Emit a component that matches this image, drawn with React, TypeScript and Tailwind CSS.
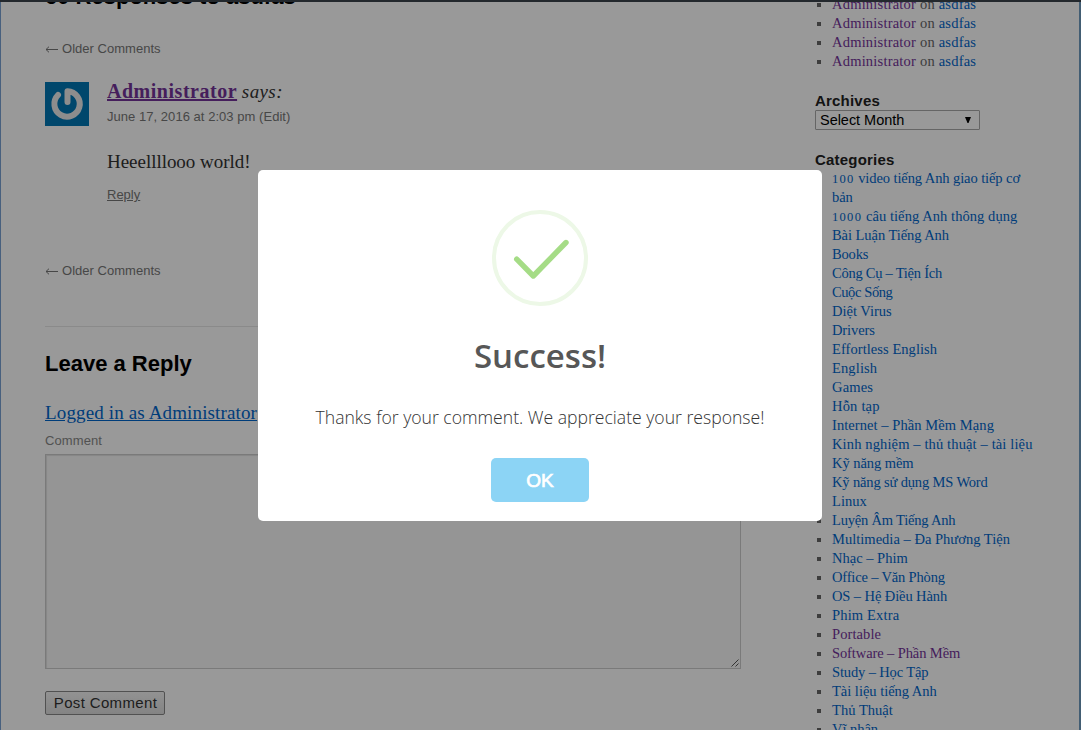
import React from "react";

type Category = { name: React.ReactNode; tone?: string; track: string };

const blue = "text-[#0066cc]";
const purple = "text-[#743399]";

const categories: Category[] = [
  {
    name: (
      <>
        <span className="text-[12.5px] leading-none tracking-[1.3px]">100</span> video tiếng Anh giao tiếp cơ<br />bản
      </>
    ),
    track: "tracking-[-0.09px]",
  },
  {
    name: (
      <>
        <span className="text-[12.5px] leading-none tracking-[1.3px]">1000</span> câu tiếng Anh thông dụng
      </>
    ),
    track: "tracking-[0.07px]",
  },
  { name: "Bài Luận Tiếng Anh", track: "tracking-[-0.06px]" },
  { name: "Books", track: "tracking-[-0.15px]" },
  { name: "Công Cụ – Tiện Ích", track: "tracking-[-0.25px]" },
  { name: "Cuộc Sống", track: "tracking-[-0.4px]" },
  { name: "Diệt Virus", track: "tracking-normal" },
  { name: "Drivers", track: "tracking-[-0.1px]" },
  { name: "Effortless English", track: "tracking-[0.06px]" },
  { name: "English", track: "tracking-[0.13px]" },
  { name: "Games", track: "tracking-[0.18px]" },
  { name: "Hỗn tạp", track: "tracking-[0.2px]" },
  { name: "Internet – Phần Mềm Mạng", track: "tracking-[0.07px]" },
  { name: "Kinh nghiệm – thủ thuật – tài liệu", track: "tracking-[0.13px]" },
  { name: "Kỹ năng mềm", track: "tracking-[-0.05px]" },
  { name: "Kỹ năng sử dụng MS Word", track: "tracking-[-0.15px]" },
  { name: "Linux", track: "tracking-[0.04px]" },
  { name: "Luyện Âm Tiếng Anh", track: "tracking-[-0.2px]" },
  { name: "Multimedia – Đa Phương Tiện", track: "tracking-[0.02px]" },
  { name: "Nhạc – Phim", track: "tracking-normal" },
  { name: "Office – Văn Phòng", track: "tracking-[-0.17px]" },
  { name: "OS – Hệ Điều Hành", track: "tracking-[-0.1px]" },
  { name: "Phim Extra", track: "tracking-[0.17px]" },
  { name: "Portable", tone: purple, track: "tracking-[0.1px]" },
  { name: "Software – Phần Mềm", tone: purple, track: "tracking-[-0.1px]" },
  { name: "Study – Học Tập", track: "tracking-[-0.14px]" },
  { name: "Tài liệu tiếng Anh", track: "tracking-[-0.02px]" },
  { name: "Thủ Thuật", track: "tracking-[0.04px]" },
  { name: "Vĩ nhân", track: "tracking-[-0.05px]" },
];

function Item({ children }: { children: React.ReactNode }) {
  return (
    <li className="flex leading-[19px]">
      <span className="mt-[8px] mr-[11px] ml-[2px] size-1 shrink-0 bg-[#666]" />
      <span className="whitespace-nowrap">{children}</span>
    </li>
  );
}

function Avatar() {
  return (
    <svg viewBox="0 0 44 44" className="size-11 shrink-0">
      <rect width="44" height="44" fill="#0077b5" />
      <path d="M13 13A12.700 12.700 0 1 0 22.500 9.200V20" fill="none" stroke="#ececec" strokeWidth="6" strokeLinecap="round" strokeLinejoin="round" />
    </svg>
  );
}

function OlderComments() {
  return (
    <a className="flex h-[20px] text-[13px] leading-[20px] text-[#777]">
      <svg viewBox="0 0 13 7" className="mt-[7px] mr-[4px] h-[7px] w-[13px]" fill="none" stroke="currentColor">
        <path d="M13 3.5H1M4 .7 1 3.5l3 2.8" />
      </svg>
      <span className="tracking-[0.02px]">Older Comments</span>
    </a>
  );
}

function Main() {
  return (
    <main className="w-[696px] shrink-0 font-['Liberation_Sans',sans-serif]">
      <h3 className="-mt-[17px] h-[56px] text-[22px] leading-[28px] font-bold text-black">60 Responses to asdfas</h3>
      <OlderComments />
      <article className="mt-[23px] flex h-[179px]">
        <Avatar />
        <div className="ml-[18px]">
          <div className="-mt-[2px] h-[24px] font-['Liberation_Serif',serif] text-[19px] leading-[24px] text-[#333]">
            <a className="text-[20px] leading-none font-bold tracking-[0.52px] text-[#743399] underline">Administrator</a>{" "}
            <span className="tracking-[0.4px] italic">says:</span>
          </div>
          <div className="mt-[3px] h-[20px] text-[13px] leading-[20px] tracking-[0.04px] text-[#777]">June 17, 2016 at 2:03 pm (Edit)</div>
          <p className="mt-[23px] h-[24px] font-['Liberation_Serif',serif] text-[19px] leading-[24px] tracking-[-0.03px] text-[#333]">
            Heeellllooo world!
          </p>
          <a className="mt-[11px] block text-[13px] leading-[20px] text-[#777] underline">Reply</a>
        </div>
      </article>
      <OlderComments />
      <section className="mt-[45px] border-t border-[#e7e7e7] pt-[23px]">
        <h3 className="h-[28px] text-[22px] leading-[28px] font-bold text-black">Leave a Reply</h3>
        <p className="mt-[23px] h-[24px] font-['Liberation_Serif',serif] text-[19px] leading-[24px] tracking-[0.14px]">
          <a className="text-[#0066cc] underline">Logged in as Administrator</a>
        </p>
        <label className="mt-[6px] block h-[20px] text-[13px] leading-[20px] tracking-[0.1px] text-[#888]">Comment</label>
        <div className="mt-[3px] flex h-[215px] items-end justify-end border border-[#ccc] bg-[#f9f9f9] p-px shadow-[inset_1px_1px_1px_rgba(0,0,0,0.1)]">
          <svg viewBox="0 0 8 8" className="size-2">
            <path d="M.5 7.5l7-7M4.500 7.500l3-3" stroke="#555" fill="none" />
          </svg>
        </div>
        <button className="mt-[22px] block h-[24px] w-[120px] rounded-[2px] border border-[#888] bg-linear-to-b from-[#f4f4f4] to-[#dcdcdc] pl-[1px] text-[15px] leading-[22px] tracking-[0.35px] text-[#333]">
          Post Comment
        </button>
      </section>
    </main>
  );
}

function Sidebar() {
  return (
    <aside className="ml-[74px] w-[240px] font-['Liberation_Serif',serif] text-[14.5px] text-[#666]">
      <ul className="-mt-[5px]">
        {[0, 1, 2, 3].map((n) => (
          <Item key={n}>
            <span className="tracking-[0.21px]">
              <a className={purple}>Administrator</a> on <a className={blue}>asdfas</a>
            </span>
          </Item>
        ))}
      </ul>
      <h3 className="mt-[20px] h-[19px] font-['Liberation_Sans',sans-serif] text-[15px] leading-[19px] font-bold tracking-[0.2px] text-[#222]">Archives</h3>
      <div className="flex h-[20px] w-[165px] items-center justify-between rounded-[1px] border border-[#a9a9a9] bg-white pr-[8px] pl-[4px] font-['Liberation_Sans',sans-serif] text-black">
        <span className="leading-[18px] tracking-[-0.03px]">Select Month</span>
        <svg viewBox="0 0 6 6" className="h-[6px] w-[6px]">
          <path d="M0 0h6L3.500 6h-1z" />
        </svg>
      </div>
      <h3 className="mt-[20px] h-[19px] font-['Liberation_Sans',sans-serif] text-[15px] leading-[19px] font-bold tracking-[0.2px] text-[#222]">Categories</h3>
      <ul>
        {categories.map((c, i) => (
          <Item key={i}>
            <a className={`${c.tone ?? blue} ${c.track}`}>{c.name}</a>
          </Item>
        ))}
      </ul>
    </aside>
  );
}

function Dialog() {
  return (
    <div role="dialog" className="absolute top-[170px] left-[258px] flex h-[351px] w-[564px] flex-col items-center rounded-[5px] bg-white pt-[40px]">
      <svg viewBox="0 0 96 96" className="size-24" fill="none">
        <circle cx="48" cy="48" r="46" stroke="#edf8e7" strokeWidth="4" />
        <path d="M24.7 49.2 41.3 66 74 32.5" stroke="#a5dc86" strokeWidth="5.4" strokeLinecap="round" strokeLinejoin="round" />
      </svg>
      <h2 className="mt-[27px] h-[46px] font-['Open_Sans',sans-serif] text-[33px] leading-[46px] font-semibold text-[#575757]">Success!</h2>
      <p className="mt-[26px] h-[24px] font-['Open_Sans',sans-serif] text-[17.6px] leading-[24px] font-light whitespace-nowrap text-[#333]">
        Thanks for your comment. We appreciate your response!
      </p>
      <button className="mt-[29px] h-[44px] w-[98px] rounded-[5px] bg-[#8cd4f5] font-['Liberation_Sans',sans-serif] text-[19px] leading-[43px] text-white [-webkit-text-stroke:0.7px_white]">
        OK
      </button>
    </div>
  );
}

export default function App() {
  return (
    <div className="relative h-[730px] w-[1081px] overflow-hidden bg-white">
      <div className="flex h-[730px] overflow-hidden border-r-2 border-l border-r-[#6f9bc0] border-l-[#78a0d2] pl-[44px]">
        <Main />
        <Sidebar />
      </div>
      <div className="absolute inset-0 bg-black/40" />
      <div className="absolute inset-x-0 top-0 h-[2px] bg-[#23282d]" />
      <Dialog />
    </div>
  );
}
